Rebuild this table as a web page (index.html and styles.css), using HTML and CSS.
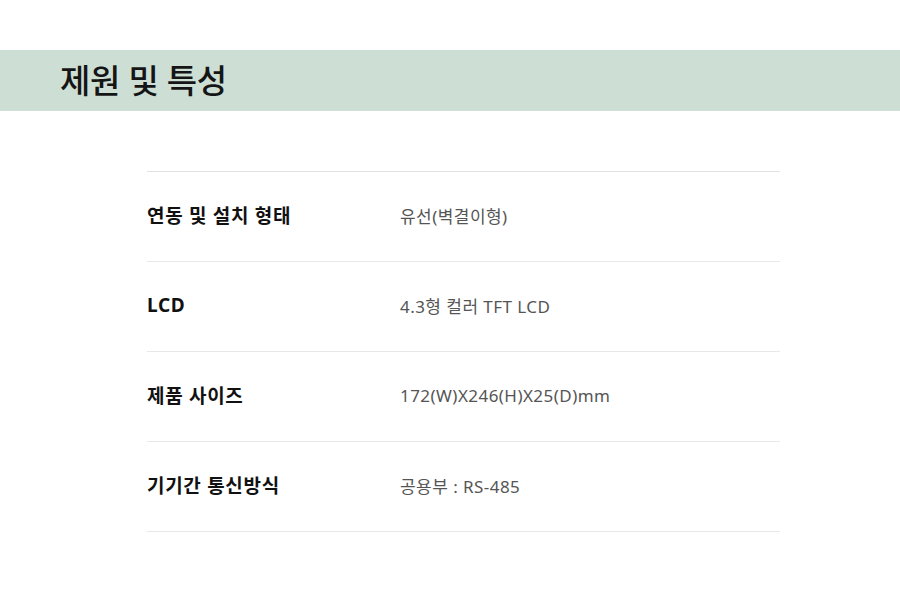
FILE: index.html
```html
<!DOCTYPE html>
<html lang="ko">
<head>
<meta charset="utf-8">
<link rel="stylesheet" href="styles.css">
</head>
<body>
<div class="banner"><h1 class="title">제원 및 특성</h1></div>
<div class="spec">
  <div class="row"><div class="label">연동 및 설치 형태</div><div class="value">유선(벽결이형)</div></div>
  <div class="row"><div class="label">LCD</div><div class="value">4.3형 컬러 TFT LCD</div></div>
  <div class="row"><div class="label">제품 사이즈</div><div class="value">172(W)X246(H)X25(D)mm</div></div>
  <div class="row"><div class="label">기기간 통신방식</div><div class="value">공용부 : RS-485</div></div>
</div>
</body>
</html>
```
FILE: styles.css
```css
html, body { margin: 0; padding: 0; background: #fff; }
body { font-family: "Noto Sans", "Noto Sans CJK KR", sans-serif; width: 900px; height: 616px; overflow: hidden; }
.banner { margin-top: 50px; height: 61px; background: #cddfd5; display: flex; align-items: center; padding-left: 60px; }
.title { margin: 0; font-size: 33px; font-weight: 500; color: #151515; line-height: 1; letter-spacing: -0.3px; }
.spec { margin: 60px 0 0 147px; width: 633px; border-top: 1px solid #e2e2e2; }
.row { height: 89px; box-sizing: border-box; padding-bottom: 3px; border-bottom: 1px solid #e8e8e8; display: flex; align-items: center; height: 90px; }
.label { width: 253px; font-size: 19px; font-weight: 700; color: #111; letter-spacing: 0.7px; }
.value { font-size: 17px; color: #555; letter-spacing: 0.45px; }
```
